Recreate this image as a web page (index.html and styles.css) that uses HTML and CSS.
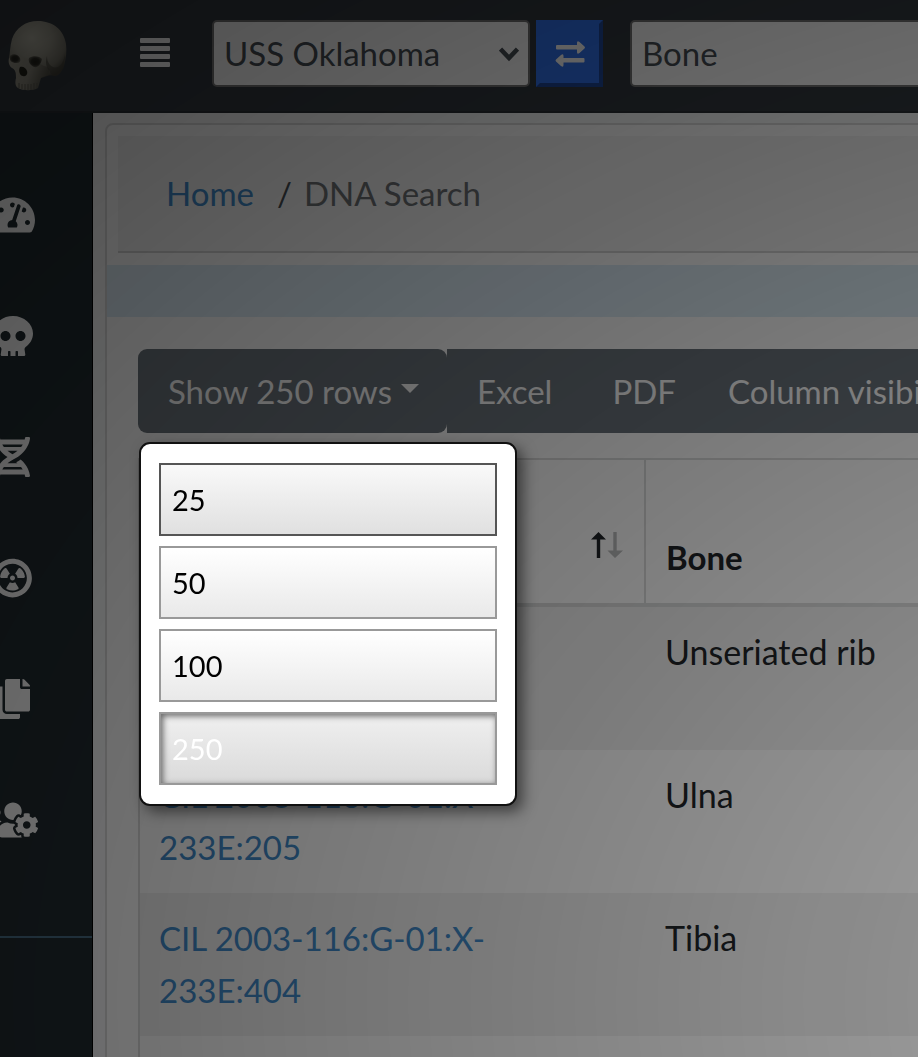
FILE: index.html
```html
<!DOCTYPE html>
<html lang="en">
<head>
<meta charset="utf-8">
<title>DNA Search</title>
<link rel="stylesheet" href="styles.css">
</head>
<body>
<header class="topbar">
  <a class="brand" href="#" aria-label="Main page">
    <svg width="64" height="76" viewBox="0 0 64 76" aria-hidden="true">
      <defs>
        <radialGradient id="bone" cx="0.4" cy="0.3" r="0.75">
          <stop offset="0" stop-color="#bdbbad"/>
          <stop offset="0.45" stop-color="#a19f92"/>
          <stop offset="0.8" stop-color="#79776c"/>
          <stop offset="1" stop-color="#45433b"/>
        </radialGradient>
        <linearGradient id="jaw" x1="0" y1="0" x2="1" y2="0.3">
          <stop offset="0" stop-color="#a6a395"/>
          <stop offset="0.6" stop-color="#939084"/>
          <stop offset="1" stop-color="#5a584e"/>
        </linearGradient>
        <radialGradient id="socket">
          <stop offset="0" stop-color="#23221c"/>
          <stop offset="0.6" stop-color="#2e2d26"/>
          <stop offset="1" stop-color="#5d5b51"/>
        </radialGradient>
      </defs>
      <path fill="url(#bone)" d="M32 1C19 1 10 8 6 19C4 26 4 33 3 38C3 43 8 49 12 54L36 58C40 56 45 54 48 56C52 56 56 52 58 46C60 39 61 31 60 24C58 10 47 1 32 1Z"/>
      <path fill="url(#jaw)" d="M3 38C2 42 3 46 6 48C10 50 10 54 10 58C9 62 9 66 12 68C17 71 27 71 32 68L35 58C38 56 43 56 44 52C44 49 41 46 38 46L27 40L13 37Z"/>
      <path fill="#45433b" opacity="0.6" d="M41 36C41 44 46 49 52 47C56 45 58 40 59 34C59 43 56 54 51 56C47 57 44 54 44 51C40 48 39 42 41 36Z"/>
      <path fill="url(#socket)" d="M4 36C7 33 12 34 14 38C15 42 13 43 10 43C6 43 3 41 4 36Z"/>
      <path fill="url(#socket)" d="M23 38C27 35 34 36 36 39C35 44 32 48 28 47C24 45 22 42 23 38Z"/>
      <path fill="#24231a" d="M14 47C17 46 20 48 21 51C22 54 20 57 17 56C14 56 12 51 14 47Z"/>
      <path stroke="#605e54" stroke-width="1" fill="none" d="M13 63V68M16 64V69M19 64V70M22 64V70M25 64V70M28 63V69M31 63V68"/>
    </svg>
  </a>
  <button class="menu-toggle" type="button" aria-label="Toggle navigation">
    <span class="bar"></span><span class="bar"></span><span class="bar"></span><span class="bar"></span>
  </button>
  <div class="picker picker-project">
    <select class="field" aria-label="Project"><option>USS Oklahoma</option></select>
    <svg class="chevron" width="20" height="16" viewBox="0 0 20 16" aria-hidden="true"><path d="M1.500 3L10 12L18.500 3" fill="none" stroke="#495057" stroke-width="4.500"/></svg>
  </div>
  <button class="swap" type="button" aria-label="Switch project">
    <svg width="34" height="28" viewBox="0 0 34 28" aria-hidden="true">
      <path fill="#fff" d="M4 5H24V3Q24 0 26.500 2L31.500 6.500Q32.500 7.500 31.500 8.500L26.500 13Q24 15 24 12V9.500H4Q3 9.500 3 8.500V6Q3 5 4 5Z"/>
      <path fill="#fff" d="M30.500 18H10.500V16Q10.500 13 8 15L3 19.500Q2 20.500 3 21.500L8 26Q10.500 28 10.500 25V22.500H30.500Q31.500 22.500 31.500 21.500V19Q31.500 18 30.500 18Z"/>
    </svg>
  </button>
  <div class="picker picker-type">
    <select class="field" aria-label="Search by"><option>Bone</option></select>
  </div>
</header>

<div class="shell">
  <nav class="sidebar" aria-label="Main">
    <a class="side-link" href="#" aria-label="Dashboard"><svg width="45" height="40" viewBox="0 0 576 512"><path d="M288 32C128.940 32 0 160.940 0 320c0 52.800 14.250 102.260 39.060 144.800 5.610 9.620 16.300 15.200 27.440 15.200h443c11.140 0 21.830-5.580 27.440-15.200C561.750 422.260 576 372.800 576 320c0-159.060-128.940-288-288-288zm0 64c14.710 0 26.580 10.130 30.320 23.650-1.110 2.260-2.640 4.230-3.450 6.670l-9.220 27.670c-5.130 3.490-10.970 6.010-17.640 6.010-17.670 0-32-14.330-32-32S270.330 96 288 96zM96 384c-17.670 0-32-14.330-32-32s14.330-32 32-32 32 14.330 32 32-14.330 32-32 32zm48-160c-17.670 0-32-14.330-32-32s14.330-32 32-32 32 14.330 32 32-14.330 32-32 32zm246.770-72.410l-61.330 184C343.130 347.330 352 364.540 352 384c0 11.720-3.380 22.550-8.880 32H232.880c-5.500-9.450-8.880-20.280-8.880-32 0-33.940 26.500-61.430 59.900-63.590l61.340-184.010c4.170-12.560 17.730-19.450 30.360-15.170 12.570 4.190 19.350 17.790 15.170 30.360zm14.660 57.200l15.520-46.550c3.470-1.290 7.130-2.230 11.050-2.230 17.670 0 32 14.330 32 32s-14.330 32-32 32c-11.380-.01-20.890-6.280-26.570-15.220zM480 384c-17.670 0-32-14.330-32-32s14.330-32 32-32 32 14.330 32 32-14.330 32-32 32z"/></svg></a>
    <a class="side-link" href="#" aria-label="Specimens"><svg width="40" height="40" viewBox="0 0 512 512"><path d="M256 0C114.600 0 0 100.300 0 224c0 70.100 36.900 132.600 94.500 173.700 9.600 6.900 15.200 18.100 13.500 29.900l-9.400 66.200c-1.400 9.600 6 18.200 15.700 18.200H192v-56c0-4.400 3.600-8 8-8h16c4.400 0 8 3.600 8 8v56h64v-56c0-4.400 3.600-8 8-8h16c4.400 0 8 3.600 8 8v56h77.700c9.700 0 17.100-8.600 15.700-18.200l-9.400-66.200c-1.700-11.700 3.800-23 13.500-29.900C475.100 356.600 512 294.100 512 224 512 100.300 397.400 0 256 0zm-96 320c-35.300 0-64-28.700-64-64s28.700-64 64-64 64 28.700 64 64-28.700 64-64 64zm192 0c-35.300 0-64-28.700-64-64s28.700-64 64-64 64 28.700 64 64-28.700 64-64 64z"/></svg></a>
    <a class="side-link" href="#" aria-label="DNA"><svg width="35" height="40" viewBox="0 0 448 512"><path d="M.1 494.100c-1.100 9.500 6.300 17.800 15.900 17.800l32.300.1c8.100 0 14.900-5.900 16-13.900.7-4.900 1.800-11.100 3.400-18.100H380c1.600 6.900 2.900 13.200 3.500 18.100 1.100 8 7.900 14 16 13.900l32.300-.1c9.600 0 17.100-8.300 15.900-17.800-4.600-37.900-25.600-129-118.900-207.700-17.600 12.400-37.100 24.200-58.500 35.400 6.200 4.600 11.400 9.400 17 14.200H159.700c21.300-18.100 47-35.600 78.700-51.400C410.500 199.100 442.100 65.800 447.900 17.900 449 8.400 441.600.1 432 .1L399.600 0c-8.100 0-14.900 5.900-16 13.900-.7 4.900-1.800 11.100-3.400 18.100H67.800c-1.600-7-2.700-13.100-3.400-18.100-1.100-8-7.900-14-16-13.900L16.100.1C6.500.1-1 8.400.1 17.900 5.300 60.800 31.400 171.800 160 256 31.500 340.200 5.300 451.200.1 494.100zM224 219.600c-25.100-13.700-46.400-28.400-64.300-43.600h128.500c-17.800 15.200-39.100 30-64.200 43.600zM355.100 96c-5.800 10.400-12.800 21.100-21 32H114c-8.300-10.900-15.300-21.600-21-32h262.100zM92.900 416c5.800-10.400 12.800-21.100 21-32h219.400c8.300 10.900 15.400 21.600 21.200 32H92.900z"/></svg></a>
    <a class="side-link" href="#" aria-label="Isotopes"><svg width="39" height="40" viewBox="0 0 496 512"><path d="M312 256h79.100c9.200 0 16.900-7.700 16-16.800-4.600-43.600-27-81.800-59.500-107.800-7.600-6.100-18.800-4.500-24 3.800L281.900 202c18 11.200 30.100 31.200 30.100 54zm-97.800 54.100L172.400 377c-4.900 7.800-2.400 18.400 5.800 22.500 21.100 10.400 44.700 16.500 69.800 16.500s48.700-6.100 69.900-16.500c8.200-4.100 10.600-14.700 5.800-22.500l-41.800-66.900c-9.800 6.200-21.400 9.900-33.800 9.900s-24.100-3.700-33.900-9.900zM104.900 256H184c0-22.800 12.100-42.800 30.200-54.100l-41.700-66.800c-5.200-8.300-16.400-9.900-24-3.800-32.600 26-54.900 64.200-59.500 107.800-1.100 9.200 6.700 16.900 15.900 16.900zM248 504c137 0 248-111 248-248S385 8 248 8 0 119 0 256s111 248 248 248zm0-432c101.500 0 184 82.500 184 184s-82.500 184-184 184S64 357.500 64 256 146.500 72 248 72zm0 216c17.700 0 32-14.300 32-32s-14.300-32-32-32-32 14.300-32 32 14.300 32 32 32z"/></svg></a>
    <a class="side-link" href="#" aria-label="Reports"><svg width="35" height="40" viewBox="0 0 448 512"><path d="M320 448v40c0 13.255-10.745 24-24 24H24c-13.255 0-24-10.745-24-24V120c0-13.255 10.745-24 24-24h72v296c0 30.879 25.121 56 56 56h168zm0-344V0H152c-13.255 0-24 10.745-24 24v368c0 13.255 10.745 24 24 24h272c13.255 0 24-10.745 24-24V128H344c-13.200 0-24-10.800-24-24zm120.971-31.029L375.029 7.029A24 24 0 0 0 358.059 0H352v96h96v-6.059a24 24 0 0 0-7.029-16.970z"/></svg></a>
    <a class="side-link" href="#" aria-label="User settings"><svg width="50" height="40" viewBox="0 0 640 512"><path d="M610.500 341.300c2.600-14.100 2.600-28.500 0-42.600l25.800-14.900c3-1.700 4.300-5.200 3.300-8.500-6.700-21.600-18.200-41.200-33.200-57.400-2.300-2.500-6-3.100-9-1.400l-25.800 14.900c-10.900-9.300-23.400-16.500-36.900-21.300v-29.800c0-3.400-2.400-6.400-5.700-7.100-22.300-5-45-4.800-66.200 0-3.300.7-5.700 3.700-5.700 7.100v29.800c-13.500 4.800-26 12-36.900 21.300l-25.800-14.900c-2.900-1.700-6.700-1.100-9 1.400-15 16.200-26.500 35.800-33.200 57.400-1 3.300.4 6.800 3.300 8.500l25.800 14.900c-2.600 14.100-2.600 28.500 0 42.600l-25.800 14.900c-3 1.700-4.300 5.200-3.300 8.500 6.700 21.600 18.200 41.100 33.200 57.400 2.300 2.500 6 3.100 9 1.400l25.800-14.900c10.900 9.300 23.400 16.500 36.900 21.300v29.800c0 3.400 2.400 6.400 5.700 7.100 22.300 5 45 4.800 66.200 0 3.300-.7 5.700-3.700 5.700-7.100v-29.800c13.500-4.800 26-12 36.900-21.300l25.800 14.900c2.900 1.700 6.700 1.100 9-1.400 15-16.200 26.500-35.800 33.200-57.400 1-3.300-.4-6.800-3.300-8.500l-25.800-14.900zM496 368.500c-26.800 0-48.500-21.800-48.500-48.500s21.800-48.500 48.500-48.500 48.500 21.800 48.500 48.500-21.700 48.500-48.500 48.500zM96 224c35.300 0 64-28.700 64-64s-28.700-64-64-64-64 28.700-64 64 28.700 64 64 64zm224 32c1.900 0 3.700-.5 5.600-.6 8.300-21.700 20.500-42.100 36.300-59.200 7.400-8 17.900-12.600 28.900-12.600 6.900 0 13.700 1.800 19.600 5.300l7.900 4.600c.8-.5 1.600-.9 2.400-1.400 7-14.600 11.200-30.800 11.200-48 0-61.900-50.100-112-112-112S208 82.100 208 144c0 61.900 50.100 112 112 112zm105.200 194.500c-2.300-1.200-4.600-2.600-6.800-3.900-8.200 4.800-15.300 9.800-27.500 9.800-10.900 0-21.400-4.600-28.900-12.600-18.300-19.800-32.300-43.900-40.200-69.600-10.700-34.500 24.900-49.700 25.800-50.300-.1-2.600-.1-5.200 0-7.800l-7.900-4.600c-3.800-2.200-7-5-9.800-8.100-3.300.2-6.500.6-9.800.6-24.600 0-47.600-6-68.500-16h-8.300C179.600 288 128 339.600 128 403.200V432c0 26.500 21.500 48 48 48h255.400c-3.700-6-6.200-12.800-6.200-20.300v-9.200zM173.100 274.600C161.500 263.100 145.600 256 128 256H64c-35.300 0-64 28.700-64 64v32c0 17.700 14.300 32 32 32h65.900c6.300-47.400 34.900-87.300 75.200-109.400z"/></svg></a>
    <hr class="side-rule">
  </nav>

  <main class="content">
    <section class="card">
      <nav class="crumb-box" aria-label="Breadcrumb">
        <ol class="crumbs">
          <li class="crumb"><a class="link" href="#">Home</a></li>
          <li class="crumb crumb-current">DNA Search</li>
        </ol>
      </nav>
      <div class="band"></div>
      <div class="card-body">
        <div class="toolbar">
          <button class="tool tool-rows" type="button" aria-expanded="true">Show 250 rows<span class="caret"></span></button>
          <button class="tool" type="button">Excel</button>
          <button class="tool" type="button">PDF</button>
          <button class="tool tool-columns" type="button">Column visibility</button>
          <div class="rows-menu">
            <button class="rows-option hovered" type="button">25</button>
            <button class="rows-option" type="button">50</button>
            <button class="rows-option" type="button">100</button>
            <button class="rows-option active" type="button">250</button>
          </div>
        </div>
        <table class="results">
          <thead>
            <tr>
              <th class="col-key" scope="col">
                <svg class="sort" width="34" height="28" viewBox="0 0 34 28" role="img" aria-label="Sorted ascending">
                  <path fill="#212529" d="M8.500 1L16 8.500H10.200V27H6.800V8.500H1Z"/>
                  <path fill="#212529" opacity="0.3" d="M25 27L17.500 19.500H23.300V1H26.700V19.500H33Z"/>
                </svg>
              </th>
              <th scope="col">Bone</th>
            </tr>
          </thead>
          <tbody>
            <tr><td></td><td>Unseriated rib</td></tr>
            <tr><td><a class="link" href="#">CIL 2003-116:G-01:X-233E:205</a></td><td>Ulna</td></tr>
            <tr><td><a class="link" href="#">CIL 2003-116:G-01:X-233E:404</a></td><td>Tibia</td></tr>
            <tr><td></td><td></td></tr>
          </tbody>
        </table>
      </div>
    </section>
  </main>
</div>
<div class="backdrop"></div>
</body>
</html>
```

FILE: styles.css
```css
* {
  box-sizing: border-box;
}

body {
  margin: 0;
  height: 100vh;
  overflow: hidden;
  display: flex;
  flex-direction: column;
  font-family: Lato, "Liberation Sans", sans-serif;
  font-size: 33px;
  line-height: 52px;
  color: #212529;
  background: #f8f9fa;
}

button,
select {
  font: inherit;
}

.link {
  font-size: 33px;
  color: #428bca;
  text-decoration: none;
}

/* Top bar */
.topbar {
  flex: none;
  display: flex;
  align-items: flex-start;
  height: 113px;
  padding: 20px 0 0 6px;
  overflow: hidden;
  background: #343a40;
  border-bottom: 2px solid #2b3035;
}

.brand {
  flex: none;
  height: 76px;
  width: 64px;
}

.menu-toggle {
  flex: none;
  display: flex;
  flex-direction: column;
  gap: 3px;
  width: 30px;
  margin: 18px 42px 0 70px;
  padding: 0;
  border: 0;
  background: none;
}

.bar {
  height: 5px;
  border-radius: 1px;
  background: #fff;
}

.picker {
  flex: none;
  position: relative;
}

.picker-project {
  width: 318px;
}

.picker-type {
  width: 400px;
}

.field {
  display: block;
  width: 100%;
  height: 67px;
  padding: 0 10px 1px;
  appearance: none;
  color: #495057;
  background: #fff;
  border: 2px solid #767676;
  border-radius: 5px;
}

.chevron {
  position: absolute;
  right: 11px;
  top: 26px;
}

.swap {
  flex: none;
  display: flex;
  align-items: center;
  justify-content: center;
  width: 67px;
  height: 67px;
  margin: 0 27px 0 6px;
  padding: 0;
  border: 4px solid;
  border-color: #3273ee #20489a #20489a #3273ee;
  background: #3273ee;
}

/* Page frame */
.shell {
  flex: 1;
  display: flex;
  min-height: 0;
}

.sidebar {
  flex: none;
  width: 93px;
  padding-top: 41px;
  overflow: hidden;
  background: #222d32;
  border-right: 1px solid #000;
}

.side-link {
  display: flex;
  align-items: center;
  justify-content: center;
  width: 25px;
  height: 121px;
}

.side-link svg {
  flex: none;
  fill: #fff;
}

.side-rule {
  margin: 56px 0 0;
  border: 0;
  border-top: 2px solid #4a6f88;
}

.content {
  flex: 1;
  min-width: 0;
  padding: 10px 0 0 12px;
  overflow: hidden;
}

.card {
  width: 1200px;
  min-height: 1200px;
  background: #fff;
  border: 2px solid #dcdcdc;
  border-radius: 8px;
}

.crumb-box {
  margin: 11px 11px 12px;
  padding: 31px 48px 32px;
  background: #f4f4f4;
  border-bottom: 2px solid #d4d4d4;
}

.crumbs {
  display: flex;
  margin: 0;
  padding: 0;
  list-style: none;
}

.crumb-current {
  color: #6f7376;
}

.crumb-current::before {
  content: "/";
  padding: 0 12px 0 23px;
  color: #495057;
}

.band {
  height: 52px;
  background: #ddedf7;
}

.card-body {
  padding: 32px 31px;
}

/* Table tools */
.toolbar {
  position: relative;
  display: flex;
}

.tool {
  flex: none;
  height: 84px;
  padding: 0 30px;
  color: #fff;
  background: #6c757d;
  border: 0;
}

.tool-rows {
  display: flex;
  align-items: center;
  gap: 9px;
  padding-right: 28px;
  border-radius: 9px;
}

.tool-columns {
  padding-left: 22px;
}

.caret {
  border: 9px solid transparent;
  border-top-color: #fff;
  border-bottom: 0;
  margin-bottom: 6px;
}

.rows-menu {
  position: absolute;
  z-index: 20;
  top: 100%;
  left: 1px;
  display: flex;
  flex-direction: column;
  gap: 10px;
  width: 378px;
  margin-top: 9px;
  padding: 19px 18px;
  background: #fff;
  border: 2px solid #111;
  border-radius: 11px;
  box-shadow: 6px 6px 14px rgba(0, 0, 0, 0.5);
}

.rows-option {
  height: 73px;
  padding: 0 11px;
  font-size: 29px;
  text-align: left;
  color: #000;
  background: linear-gradient(to bottom, #fff, #e9e9e9);
  border: 2px solid #999;
}

.rows-option.hovered {
  background: linear-gradient(to bottom, #f9f9f9, #e0e0e0);
  border-color: #555;
}

.rows-option.active {
  color: #fff;
  background: linear-gradient(to bottom, #f0f0f0, #dadada);
  box-shadow: inset 2px 2px 6px #666;
}

/* Results */
.results {
  width: 1100px;
  margin-top: 25px;
  table-layout: fixed;
  border-collapse: separate;
  border-spacing: 0;
  border: 2px solid #dcdddd;
}

.results th {
  height: 147px;
  padding: 20px;
  text-align: left;
  vertical-align: bottom;
  border-bottom: 4px solid #dcdddd;
}

.results .col-key {
  width: 506px;
  text-align: right;
  border-right: 2px solid #dcdddd;
}

.sort {
  display: block;
  margin: 0 0 24px auto;
}

.results td {
  height: 143px;
  padding: 19px 140px 20px 19px;
  font-size: 34px;
  vertical-align: top;
}

.results tbody tr:nth-child(odd) {
  background: #f2f2f2;
}

/* Dimming layer below the open menu */
.backdrop {
  position: fixed;
  inset: 0;
  z-index: 10;
  background: radial-gradient(2121px 1414px at 1500px 1000px, rgba(0, 0, 0, 0.3), rgba(0, 0, 0, 0.7));
}
```
